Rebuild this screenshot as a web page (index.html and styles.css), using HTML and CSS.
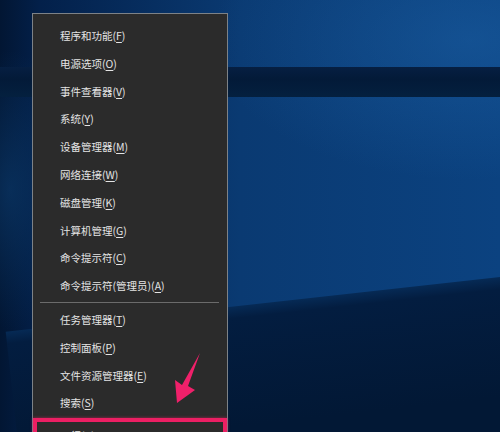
FILE: index.html
```html
<!DOCTYPE html>
<html lang="zh-CN">
<head>
    <meta charset="UTF-8">
    <title>Win+X 菜单</title>
    <link rel="stylesheet" href="styles.css">
</head>
<body>
    <div class="desktop">
        <div class="band"></div>
        <div class="floor"></div>

        <div class="power-menu">
            <ul class="menu-group">
                <li class="menu-item">程序和功能(<u>F</u>)</li>
                <li class="menu-item">电源选项(<u>O</u>)</li>
                <li class="menu-item">事件查看器(<u>V</u>)</li>
                <li class="menu-item">系统(<u>Y</u>)</li>
                <li class="menu-item">设备管理器(<u>M</u>)</li>
                <li class="menu-item">网络连接(<u>W</u>)</li>
                <li class="menu-item">磁盘管理(<u>K</u>)</li>
                <li class="menu-item">计算机管理(<u>G</u>)</li>
                <li class="menu-item">命令提示符(<u>C</u>)</li>
                <li class="menu-item">命令提示符(管理员)(<u>A</u>)</li>
            </ul>
            <div class="separator"></div>
            <ul class="menu-group">
                <li class="menu-item">任务管理器(<u>T</u>)</li>
                <li class="menu-item">控制面板(<u>P</u>)</li>
                <li class="menu-item">文件资源管理器(<u>E</u>)</li>
                <li class="menu-item">搜索(<u>S</u>)</li>
                <li class="menu-item picked">运行(<u>R</u>)</li>
            </ul>
        </div>

        <!-- 红色提示箭头 -->
        <svg class="pointer" width="40" height="60" viewBox="0 0 40 60">
            <polygon points="30,1 18,34 25,38 7,51 5,28 12,33" fill="#f0206a"/>
        </svg>
    </div>
</body>
</html>
```

FILE: styles.css
```css
* {
    margin: 0;
    padding: 0;
    box-sizing: border-box;
}

body {
    width: 500px;
    height: 432px;
    overflow: hidden;
    font-family: "Noto Sans CJK SC", "Noto Sans", sans-serif;
}

.desktop {
    position: relative;
    width: 500px;
    height: 432px;
    overflow: hidden;
    padding: 13px 0 0 32px;
    background:
        radial-gradient(ellipse 260px 140px at 470px 40px, rgba(30, 100, 170, 0.45), transparent),
        radial-gradient(ellipse 60px 140px at 10px 190px, rgba(12, 60, 110, 0.6), transparent),
        linear-gradient(90deg, #021633 0px, #03204a 40px, #0a3a72 240px, #0b4280 500px);
}

.band {
    position: absolute;
    left: 0;
    top: 67px;
    width: 500px;
    height: 30px;
    background: linear-gradient(180deg, #061f42, #031a38 40%, #04203f);
}

.floor {
    position: absolute;
    left: 0;
    top: 280px;
    width: 560px;
    height: 200px;
    transform-origin: 0 0;
    transform: rotate(-6.3deg) translateY(52px);
    background: linear-gradient(180deg, #062a55 0px, #031d40 12px, #021835 120px);
}

.power-menu {
    position: relative;
    width: 196px;
    height: 440px;
    background: #2b2b2b;
    border: 1px solid #7d8287;
    border-bottom: none;
    padding-top: 8px;
}

.menu-group {
    list-style: none;
}

.menu-item {
    height: 27.8px;
    line-height: 27.8px;
    padding-left: 27px;
    font-size: 10.5px;
    color: #e4e4e4;
    white-space: nowrap;
}

.menu-item u {
    text-underline-offset: 2px;
}

.menu-item.picked {
    margin-top: 1px;
    padding-top: 4px;
    box-shadow: inset 0 0 0 4px #ec1f63, 0 0 3px rgba(236, 31, 99, 0.6);
}

.separator {
    height: 1px;
    margin: 2px 8px 3px 7px;
    background: #6b6b6b;
}

.pointer {
    position: absolute;
    left: 170px;
    top: 352px;
}
```
